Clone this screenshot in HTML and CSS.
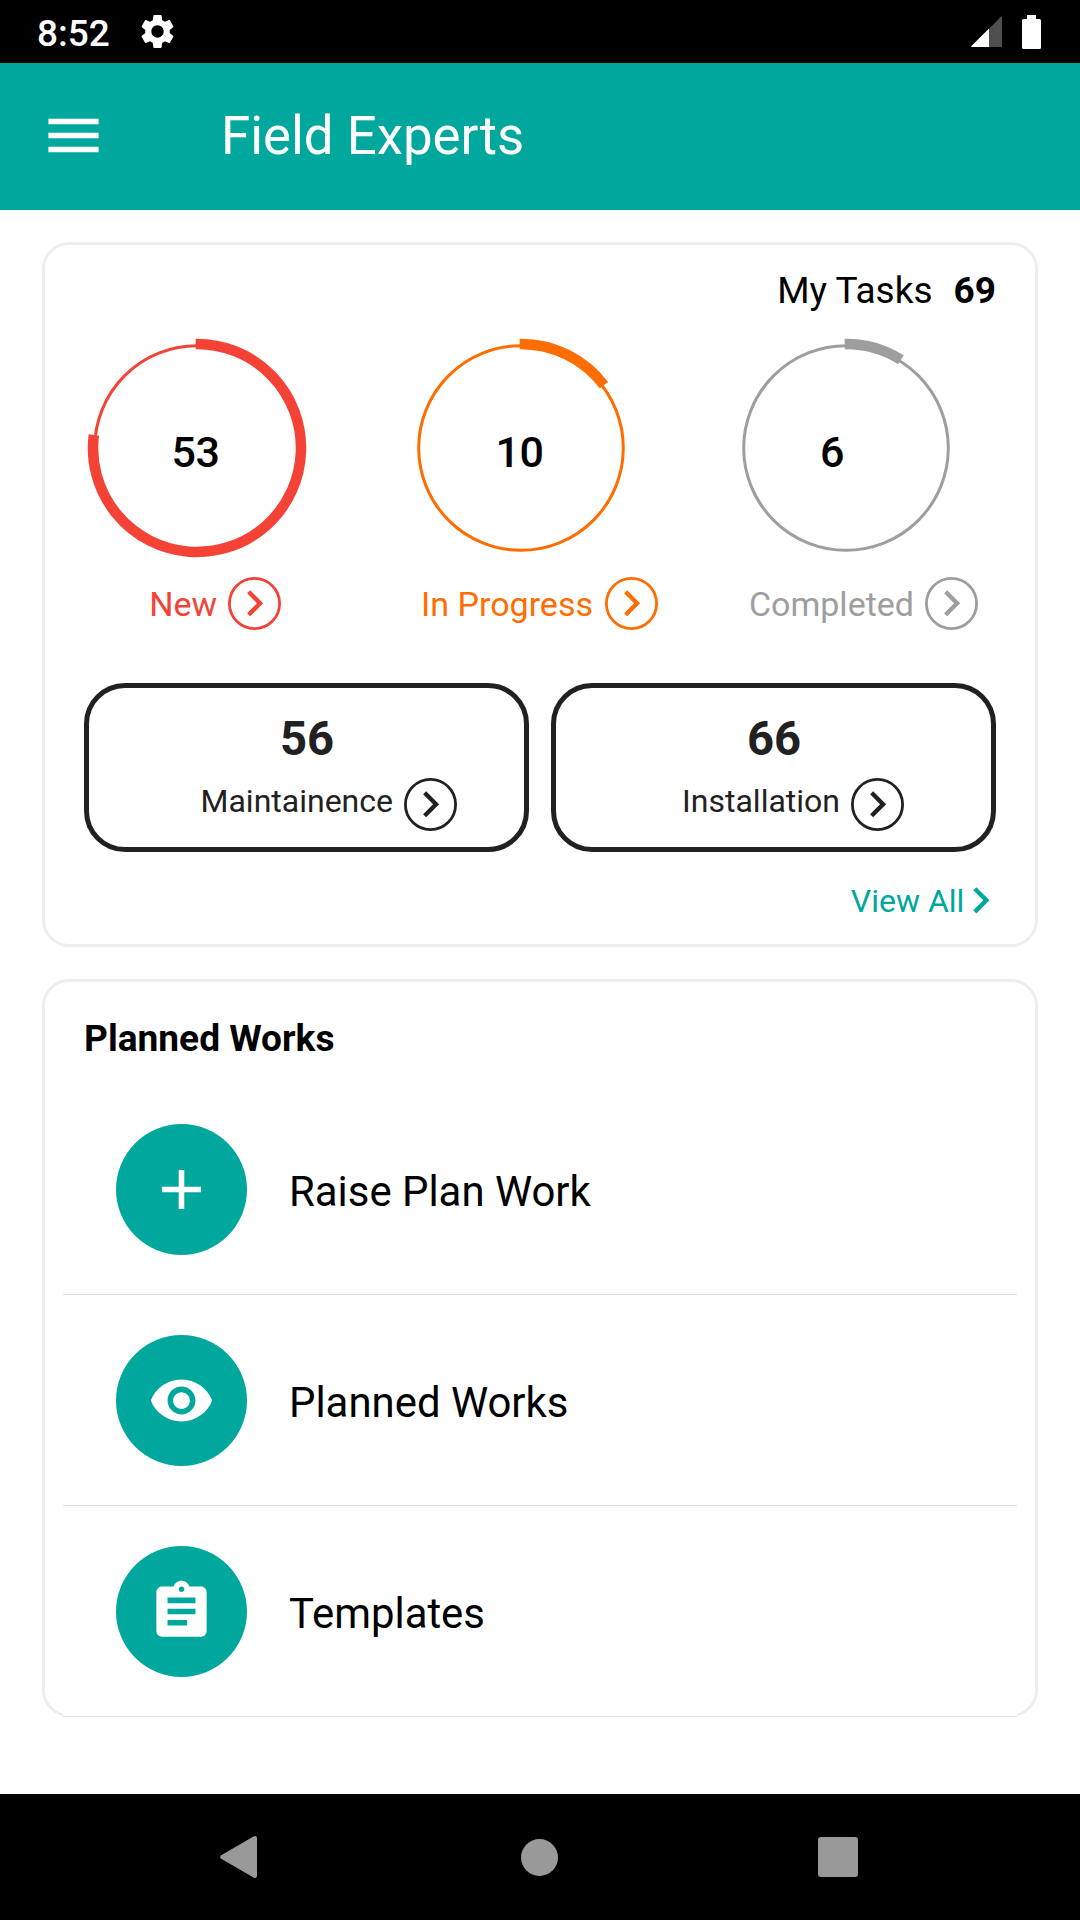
FILE: index.html
```html
<!DOCTYPE html>
<html lang="en">
<head>
<meta charset="utf-8">
<title>Field Experts</title>
<link rel="stylesheet" href="styles.css">
</head>
<body>
<svg class="defs" width="0" height="0" aria-hidden="true">
  <symbol id="go" viewBox="-26.5 -26.5 53 53">
    <circle r="25.1" fill="none" stroke="currentColor" stroke-width="2.8"/>
    <path transform="scale(2.17) translate(-12 -12.1)" fill="currentColor" d="M10 6 8.59 7.41 13.17 12l-4.58 4.59L10 18l6-6z"/>
  </symbol>
</svg>
<div class="screen">
  <header class="status">
    <span class="time">8:52</span>
    <svg class="gear" viewBox="0 0 24 24"><path fill="#fff" d="M19.14 12.94c.04-.3.06-.61.06-.94 0-.32-.02-.64-.07-.94l2.03-1.58c.18-.14.23-.41.12-.61l-1.92-3.32c-.12-.22-.37-.29-.59-.22l-2.39.96c-.5-.38-1.03-.7-1.62-.94L14.4 2.81c-.04-.24-.24-.41-.48-.41h-3.84c-.24 0-.43.17-.47.41L9.25 5.35c-.59.24-1.13.57-1.62.94l-2.39-.96c-.22-.08-.47 0-.59.22L2.74 8.87c-.12.21-.08.47.12.61l2.03 1.58c-.05.3-.09.63-.09.94s.02.64.07.94l-2.03 1.58c-.18.14-.23.41-.12.61l1.92 3.32c.12.22.37.29.59.22l2.39-.96c.5.38 1.03.7 1.62.94l.36 2.54c.05.24.24.41.48.41h3.84c.24 0 .44-.17.47-.41l.36-2.54c.59-.24 1.13-.56 1.62-.94l2.39.96c.22.08.47 0 .59-.22l1.92-3.32c.12-.22.07-.47-.12-.61zM12 15.6c-1.98 0-3.6-1.62-3.6-3.6s1.62-3.6 3.6-3.6 3.6 1.62 3.6 3.6-1.62 3.6-3.6 3.6z"/></svg>
    <span class="spacer"></span>
    <svg class="signal" viewBox="0 0 31 31"><path fill="#4f4f4f" d="M18 13 30 .6Q31 0 31 1V30Q31 31 30 31H18z"/><path fill="#fff" d="M18 12.5V31H1Q-.4 31 .4 30z"/></svg>
    <svg class="battery" viewBox="0 0 19 34"><path fill="#fff" d="M5 0h9v4h3.5Q19 4 19 5.500v27Q19 34 17.500 34h-16Q0 34 0 32.500v-27Q0 4 1.500 4H5z"/></svg>
  </header>

  <div class="appbar">
    <svg class="menu" viewBox="0 0 24 24"><path fill="#fff" d="M3 18h18v-2H3v2zm0-5h18v-2H3v2zm0-7v2h18V6H3z"/></svg>
    <h1 class="title">Field Experts</h1>
  </div>

  <main class="content">
    <section class="card tasks">
      <div class="total"><span>My Tasks</span><b>69</b></div>

      <div class="stats">
        <div class="stat stat-new">
          <div class="ring">
            <svg viewBox="-110 -110 220 220"><circle class="track" r="102.3"/><path class="arc" d="M-1.3-103.990A104 104 0 1 1-103.180-13"/></svg>
            <span class="count">53</span>
          </div>
          <div class="label"><span>New</span><svg class="go"><use href="#go"/></svg></div>
        </div>
        <div class="stat stat-progress">
          <div class="ring">
            <svg viewBox="-110 -110 220 220"><circle class="track" r="102.3"/><path class="arc" d="M-1.3-103.990A104 104 0 0 1 82.900-62.800"/></svg>
            <span class="count">10</span>
          </div>
          <div class="label"><span>In Progress</span><svg class="go"><use href="#go"/></svg></div>
        </div>
        <div class="stat stat-done">
          <div class="ring">
            <svg viewBox="-110 -110 220 220"><circle class="track" r="102.3"/><path class="arc" d="M-1.3-103.990A104 104 0 0 1 54.900-88.300"/></svg>
            <span class="count">6</span>
          </div>
          <div class="label"><span>Completed</span><svg class="go"><use href="#go"/></svg></div>
        </div>
      </div>

      <div class="kinds">
        <div class="kind">
          <b class="kind-count">56</b>
          <div class="kind-label"><span>Maintainence</span><svg class="go"><use href="#go"/></svg></div>
        </div>
        <div class="kind kind-install">
          <b class="kind-count">66</b>
          <div class="kind-label"><span>Installation</span><svg class="go"><use href="#go"/></svg></div>
        </div>
      </div>

      <div class="view-all"><span>View All</span><svg class="chevron" viewBox="8 5 9 14"><path fill="currentColor" d="M10 6 8.59 7.41 13.17 12l-4.58 4.59L10 18l6-6z"/></svg></div>
    </section>

    <section class="card works">
      <h2 class="heading">Planned Works</h2>
      <ul class="list">
        <li class="row">
          <span class="disc"><svg viewBox="0 0 24 24"><path fill="#fff" d="M19 13h-6v6h-2v-6H5v-2h6V5h2v6h6z"/></svg></span>
          <span class="row-text">Raise Plan Work</span>
        </li>
        <li class="row">
          <span class="disc"><svg viewBox="0 0 24 24"><path fill="#fff" d="M12 4.500C7 4.500 2.730 7.610 1 12c1.730 4.390 6 7.500 11 7.500s9.270-3.110 11-7.500c-1.730-4.390-6-7.500-11-7.500zM12 17c-2.760 0-5-2.240-5-5s2.240-5 5-5 5 2.240 5 5-2.240 5-5 5zm0-8c-1.660 0-3 1.340-3 3s1.340 3 3 3 3-1.340 3-3-1.340-3-3-3z"/></svg></span>
          <span class="row-text">Planned Works</span>
        </li>
        <li class="row">
          <span class="disc"><svg viewBox="0 0 24 24"><path fill="#fff" d="M19 3h-4.180C14.400 1.840 13.300 1 12 1s-2.400.84-2.820 2H5c-1.100 0-2 .9-2 2v14c0 1.100.9 2 2 2h14c1.100 0 2-.9 2-2V5c0-1.100-.9-2-2-2zm-7 0c.55 0 1 .45 1 1s-.45 1-1 1-1-.45-1-1 .45-1 1-1zm2 14H7v-2h7v2zm3-4H7v-2h10v2zm0-4H7V7h10v2z"/></svg></span>
          <span class="row-text">Templates</span>
        </li>
      </ul>
    </section>
  </main>

  <nav class="navbar">
    <svg class="nav-back" viewBox="0 0 37 42"><path fill="#999" d="M1.200 19.200 33.500.6Q37-1 37 2.500v37Q37 43 33.500 41.400L1.200 22.800Q-1 21 1.200 19.200z"/></svg>
    <span class="nav-home"></span>
    <span class="nav-recent"></span>
  </nav>
</div>
</body>
</html>
```

FILE: styles.css
```css
* { box-sizing: border-box; }

body {
  margin: 0;
  background: #fff;
  color: #000;
  font-family: Roboto, "Liberation Sans", sans-serif;
}

svg { display: block; flex: none; }
.defs { position: absolute; }

.screen {
  width: 1080px;
  height: 1920px;
  display: flex;
  flex-direction: column;
}

/* System status bar */
.status {
  height: 63px;
  padding: 0 39px 0 37px;
  display: flex;
  align-items: center;
  background: #000;
  color: #fff;
}
.time {
  width: 99.5px;
  padding-top: 4px;
  font-size: 37px;
  font-weight: 500;
  line-height: 44px;
}
.gear { width: 41px; height: 41px; }
.spacer { flex: 1; }
.signal { width: 31px; height: 31px; margin-right: 20px; }
.battery { width: 19px; height: 34px; }

/* App bar */
.appbar {
  height: 147px;
  padding: 0 0 2px 39.5px;
  display: flex;
  align-items: center;
  background: #00a79d;
  color: #fff;
}
.menu { width: 67px; height: 67px; }
.title {
  margin: 0 0 0 114.5px;
  font-size: 52.8px;
  font-weight: 400;
  line-height: 62px;
}

.content {
  flex: 1;
  padding: 32px 42px 0;
  display: flex;
  flex-direction: column;
  gap: 32px;
}
.card {
  border: 3px solid #eee;
  border-radius: 27px;
}

/* Task summary */
.tasks {
  height: 705px;
  padding: 24px 39px 0;
}
.total {
  display: flex;
  justify-content: flex-end;
  gap: 21px;
  font-size: 37px;
  line-height: 44px;
}
.stats {
  margin-top: 25px;
  padding-left: 3px;
  display: grid;
  grid-template-columns: 324px 325px 1fr;
}
.stat { display: flex; flex-direction: column; gap: 19px; }
.stat-new { color: #f44336; --label-end: 194px; --count-end: 3px; }
.stat-progress { color: #ff6d00; --label-end: 247px; --count-end: 3px; }
.stat-done { color: #9e9e9e; --label-end: 242px; --count-end: 28px; }
.ring {
  width: 220px;
  height: 220px;
  display: grid;
}
.ring > * { grid-area: 1 / 1; }
.track { fill: none; stroke: currentColor; stroke-width: 3; }
.arc { fill: none; stroke: currentColor; stroke-width: 10.5; }
.count {
  place-self: center;
  padding: 7px var(--count-end) 0 0;
  color: #000;
  font-size: 43px;
  font-weight: 500;
  line-height: 50px;
  letter-spacing: -0.5px;
}
.label {
  width: var(--label-end);
  display: flex;
  justify-content: flex-end;
  align-items: center;
  gap: 11px;
  font-size: 34px;
  line-height: 40px;
  white-space: nowrap;
}
.stat-progress .label { gap: 12px; }
.go { width: 53px; height: 53px; }

.kinds {
  margin-top: 53px;
  display: grid;
  grid-template-columns: 1fr 1fr;
  gap: 22px;
}
.kind {
  height: 169px;
  padding-top: 23px;
  border: 5px solid #212121;
  border-radius: 41px;
  color: #212121;
  text-align: center;
}
.kind-count {
  display: block;
  padding-left: 1px;
  font-size: 47.25px;
  line-height: 56px;
}
.kind-label {
  margin: 11px 67px 0 0;
  display: flex;
  justify-content: flex-end;
  align-items: center;
  gap: 11px;
  font-size: 32px;
  line-height: 38px;
}
.kind-install .kind-label { margin-right: 87px; }
.kind-label span { padding-bottom: 8px; }

.view-all {
  height: 40px;
  margin: 28px 4px 0 0;
  display: flex;
  justify-content: flex-end;
  align-items: center;
  gap: 8px;
  color: #00a79d;
  font-size: 32px;
  line-height: 42px;
}
.view-all span { padding-top: 2px; }
.chevron { width: 19.7px; height: 30.6px; }

/* Planned works */
.works {
  height: 738px;
  padding: 35px 18px 0;
}
.heading {
  margin: 0 0 23px 21px;
  font-size: 37.1px;
  font-weight: 700;
  line-height: 44px;
}
.list {
  margin: 0;
  padding: 0;
  list-style: none;
}
.row {
  height: 211px;
  padding-left: 53px;
  display: flex;
  align-items: center;
  gap: 42px;
  border-bottom: 1px solid #e0e0e0;
  background: #fff;
}
.disc {
  width: 131px;
  height: 131px;
  display: grid;
  place-items: center;
  border-radius: 50%;
  background: #00a79d;
}
.disc svg { width: 67px; height: 67px; }
.row-text {
  padding-top: 5px;
  font-size: 41.9px;
  line-height: 50px;
}

/* System navigation bar */
.navbar {
  height: 126px;
  padding: 0 222px 0 220px;
  display: grid;
  grid-template-columns: 301px 297px 40px;
  align-items: center;
  background: #000;
}
.nav-back { width: 37px; height: 42px; }
.nav-home { width: 37px; height: 37px; border-radius: 50%; background: #999; }
.nav-recent { width: 40px; height: 40px; border-radius: 3px; background: #999; }
```
